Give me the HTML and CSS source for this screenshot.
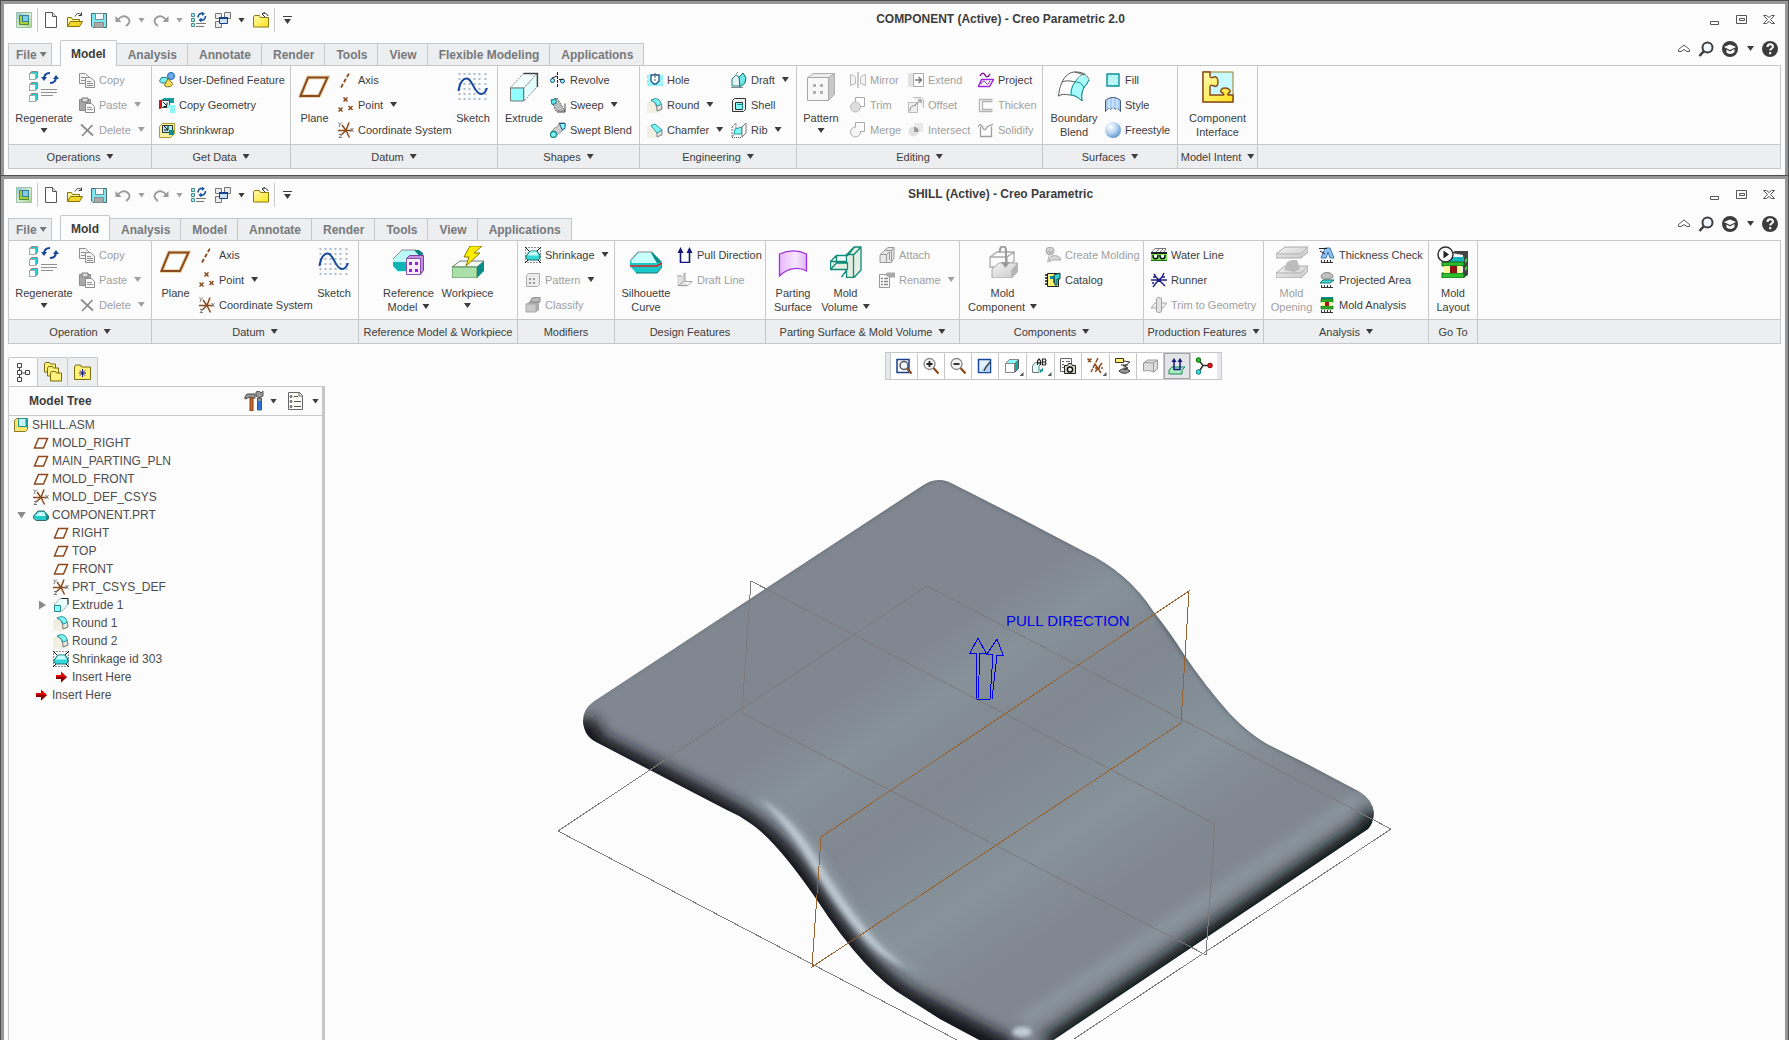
FILE: index.html
```html
<!DOCTYPE html>
<html lang="en">
<head>
<meta charset="utf-8">
<title>SHILL (Active) - Creo Parametric</title>
<link rel="stylesheet" href="styles.css">
</head>
<body>
<svg class="sprite" aria-hidden="true">
<defs>
<linearGradient id="gg" x1="0" y1="0" x2="1" y2="1"><stop offset="0" stop-color="#f4f4f4"/><stop offset="1" stop-color="#c8c8c8"/></linearGradient>
<linearGradient id="gy" x1="0" y1="0" x2="1" y2="1"><stop offset="0" stop-color="#fffbb0"/><stop offset="1" stop-color="#ffe21a"/></linearGradient>
<linearGradient id="gv" x1="0" x2="1"><stop offset="0" stop-color="#e9b8ff"/><stop offset=".6" stop-color="#f6e6ff"/><stop offset="1" stop-color="#e2b4fa"/></linearGradient>
<linearGradient id="glogo" x1="0" y1="0" x2="1" y2="1"><stop offset="0" stop-color="#8cc4e8"/><stop offset=".5" stop-color="#dcebd0"/><stop offset="1" stop-color="#a9d08a"/></linearGradient>
<radialGradient id="gball" cx=".35" cy=".3" r=".75"><stop offset="0" stop-color="#fff"/><stop offset=".5" stop-color="#bcd8f2"/><stop offset="1" stop-color="#5e93cc"/></radialGradient>
</defs>
<symbol id="logo" viewBox="0 0 16 16"><path d="M.5.5h15v15H.5z" fill="url(#glogo)" stroke="#9cc4a8"/><path d="M3.500 3.500h9v9h-9z" fill="#a8d03c" stroke="#4c8a3c"/><path d="M6.500 3.500h6v6h-6z" fill="#7fcbe4" stroke="#2f7f9c"/></symbol>
<symbol id="new" viewBox="0 0 16 16"><path d="M2.500.5h7l4 4v11h-11z" fill="#fff" stroke="#555"/><path d="M9.500.5v4h4" fill="#ddd" stroke="#555"/></symbol>
<symbol id="open" viewBox="0 0 16 16"><path d="M.5 14.500v-9h4l1 2h7v2" fill="#fff5a0" stroke="#8a7400"/><path d="M.5 14.500l3-5h12l-3 5z" fill="#f2d62e" stroke="#8a7400"/><path d="M8 4.500c1-3 4-4 6-2M14.500.5v3h-3" fill="none" stroke="#333"/></symbol>
<symbol id="save" viewBox="0 0 16 16"><path d="M.5 1.500h15v14H2l-1.500-1.500z" fill="#7fe8ee" stroke="#4a6a70"/><path d="M4.500 1.500h8v6h-8z" fill="#fff" stroke="#6b9094"/><path d="M3.500 10.500h9v5h-9z" fill="#a8a8a8" stroke="#8a8a8a"/></symbol>
<symbol id="undo" viewBox="0 0 16 16"><path d="M3 8c2-4 7-5 10-2s1 6-2 8" fill="none" stroke="#9a9a9a" stroke-width="1.800"/><path d="M.5 4v6h6z" fill="#9a9a9a"/></symbol>
<symbol id="redo" viewBox="0 0 16 16"><path d="M13 8C11 4 6 3 3 6s-1 6 2 8" fill="none" stroke="#9a9a9a" stroke-width="1.800"/><path d="M15.500 4v6h-6z" fill="#9a9a9a"/></symbol>
<symbol id="regen16" viewBox="0 0 16 16"><path d="M.5 1.500h3v3h-3zM.5 6.500h3v3h-3zM.5 11.500h3v3h-3z" fill="#9ff0f0" stroke="#4a8a8a"/><path d="M7 5.500c0-3 2-4.500 5-4M14.500 4c0 3-2 4.500-5 4" fill="none" stroke="#17509c" stroke-width="1.600"/><path d="M11 0l3 1.500-3 2.500zM10.500 5.500v5l-3-2.500z" fill="#17509c"/><path d="M5 11.500h10M5 14.500h8" stroke="#777"/></symbol>
<symbol id="wins" viewBox="0 0 16 16"><g fill="#ececec" stroke="#777"><path d="M.5 1.500h6v5h-6zM9.500.5h6v6h-6zM.5 9.500h6v6h-6z"/></g><path d="M4.500 5.500h8v6h-8z" fill="#cfe0f6" stroke="#17408c"/><path d="M4 5h9v2H4z" fill="#17408c"/></symbol>
<symbol id="closef" viewBox="0 0 16 16"><path d="M.5 15V5l1-1.500h5l1 2h8V15z" fill="url(#gy)" stroke="#8a7a10"/><path d="M15 4c-1-3-4-3-5-2M12 0L9 2l3 3" fill="none" stroke="#333"/></symbol>
<symbol id="regen" viewBox="0 0 32 32"><g id="cube"><path d="M1.500 2.500l2-2h6v6l-2 2h-6z" fill="#16d2d2" stroke="#8a8a8a"/><path d="M1.500 2.500h6v6h-6z" fill="#f6ffff" stroke="#a0a8a8"/></g><use href="#cube" y="11"/><use href="#cube" y="22"/><path d="M16 8c0-4 2-6 6-6M28 6c0 4-2 6-6 6" fill="none" stroke="#17489c" stroke-width="2"/><path d="M13 6l3 4 3-4zM25 8l3-4 3 4z" fill="#17489c"/><path d="M13 18.500h16M13 21.500h16M13 24.500h12" stroke="#909090"/></symbol>
<symbol id="copy" viewBox="0 0 16 16"><g fill="#f2f2f2" stroke="#8f8f8f"><path d="M.5 1.500h6l3 3v7h-9z"/><path d="M6.500 5.500h5l4 3.500v6.500h-9z"/><path d="M2 5.500h4M2 8.500h4M8 9.500h4M8 11.500h6M8 13.500h6"/></g></symbol>
<symbol id="paste" viewBox="0 0 16 16"><path d="M.5 2.500h11v11H.5z" fill="#a8a8a8" stroke="#8a8a8a"/><path d="M3 1h6v4H3z" fill="#ddd" stroke="#777"/><path d="M6.500 6.500h6l3 3v6h-9z" fill="#fafafa" stroke="#8a8a8a"/><path d="M8 10.500h5M8 12.500h6" stroke="#999"/></symbol>
<symbol id="delete" viewBox="0 0 16 16"><path d="M2 2.500l12 11M13.500 3L3 14" stroke="#8a8a8a" stroke-width="1.700" fill="none"/></symbol>
<symbol id="udf" viewBox="0 0 16 16"><path d="M.5 9l2-3.500h5l2 2.500-2 3h-5z" fill="#7ff0f0" stroke="#1c7f8a"/><circle cx="12" cy="4" r="3.500" fill="#6aaef2" stroke="#1b5ca8"/><path d="M9 6.500l4.500 5c1 3-7 5-8 1.500z" fill="#f5dc5a" stroke="#7d6a10"/></symbol>
<symbol id="copygeo" viewBox="0 0 16 16"><path d="M0 3h2v9H0z" fill="#d01818"/><path d="M2 3l3-2h10v5H2z" fill="#159c9c"/><path d="M2.500 3.500h8v7h-8z" fill="#e4ffff" stroke="#444"/><path d="M4 5l4 4M8 5.500v4H4.500" stroke="#111" fill="none"/><path d="M8 8h8v8h-5V11H8z" fill="#8df6f6"/></symbol>
<symbol id="shrinkwrap" viewBox="0 0 16 16"><path d="M.5 4.500l3-3h12v10l-4 4H.5z" fill="#f9efa0" stroke="#b09a28"/><path d="M3.500 3.500h10v7h-10z" fill="#a8f0f0" stroke="#333"/><path d="M5 4l4 4M9 4v4H5" stroke="#111" fill="none"/><path d="M10 8h5v5h-5z" fill="#0d8c8c"/></symbol>
<symbol id="plane" viewBox="0 0 32 32"><path d="M9 6.500h19.500L20 25H1.500z" fill="#fff" stroke="#e8d9b0" stroke-width="4"/><path d="M9 6.500h19.500L20 25H1.500z" fill="none" stroke="#8a4a1e" stroke-width="2"/></symbol>
<symbol id="plane16" viewBox="0 0 16 16"><path d="M5.500 3.500h9l-4 9.500h-9z" fill="#fff" stroke="#8a4a1e" stroke-width="1.500"/></symbol>
<symbol id="axis" viewBox="0 0 16 16"><path d="M3 15.500L11.500.5" stroke="#8a4a1e" stroke-width="1.800" stroke-dasharray="4 2"/></symbol>
<symbol id="point" viewBox="0 0 16 16"><path d="M5.500.5l4 4m0-4l-4 4M.5 10.500l4 4m0-4l-4 4M10.500 9l4 4m0-4l-4 4" stroke="#8a4a1e" stroke-width="1.500"/></symbol>
<symbol id="csys" viewBox="0 0 16 16"><path d="M8 8.500H0M8 8.500h5M8 8.500l3-8M8 8.500L3 13M8 8.500l3.500 7M8 8.500L4 3" stroke="#8a4a1e" stroke-width="1.500"/><path d="M.5.5l1.500 2L4 .5M2 2.500L1 5M12.500 6l3 4m0-4l-3 4M1 12.500h3l-3 3h3" fill="none" stroke="#777"/></symbol>
<symbol id="sketch" viewBox="0 0 32 32"><path d="M2.500 2v28M7.500 2v28M12.500 2v28M17.500 2v28M22.500 2v28M28.500 2v28" stroke="#a9bccb" stroke-width="2" stroke-dasharray="2 3"/><path d="M1.500 20C3 10 7 7 10 7.500c6 1 7 15 14 15.500 3 0 5-3 6-6" fill="none" stroke="#17489c" stroke-width="2"/></symbol>
<symbol id="extrude" viewBox="0 0 32 32"><path d="M2 17L15.500 2.500H29L16 17z" fill="#f2ffff" stroke="#888" stroke-dasharray="2 1"/><path d="M29 2.500v13.500L16 30V17z" fill="#e4ffff" stroke="#888" stroke-dasharray="2 1"/><path d="M15.500 2.500H29.500V16" fill="none" stroke="#444" stroke-width="1.300"/><path d="M2.500 17h13v13h-13z" fill="#92ffff" stroke="#777"/></symbol>
<symbol id="extrude16" viewBox="0 0 16 16"><path d="M1 8l6-6.500h8v6L8 15z" fill="#e8ffff" stroke="#888" stroke-dasharray="2 1"/><path d="M9 1.500h6v6" fill="none" stroke="#222"/><path d="M1.500 8.500h6v6h-6z" fill="#8ff" stroke="#298a8a"/></symbol>
<symbol id="revolve" viewBox="0 0 16 16"><path d="M7.500 0v16" stroke="#222" stroke-dasharray="3 1"/><circle cx="2.500" cy="8.500" r="2" fill="#8ff" stroke="#247"/><circle cx="12.500" cy="9" r="2" fill="#8ff" stroke="#247"/><path d="M2 6l5-2M9 7.500h4" stroke="#222"/></symbol>
<symbol id="sweep" viewBox="0 0 16 16"><path d="M1 3l6-2 8 13H6z" fill="#bcbcbc" stroke="#666" stroke-dasharray="2 1"/><path d="M1 3.500l5-2v5l-4 1z" fill="#5fe8e8" stroke="#1c7f8a"/><path d="M15 6.500V15H7" fill="none" stroke="#444"/></symbol>
<symbol id="swept" viewBox="0 0 16 16"><path d="M2 10C4 4 9 6 9 1h6c0 8-5 9-8 12z" fill="#cdcdcd" stroke="#888"/><path d="M9.500 1.500h5.500v5l-3 1z" fill="#8ff" stroke="#258"/><circle cx="3.500" cy="12.500" r="3" fill="#8ff" stroke="#198a8a" stroke-width="1.300"/></symbol>
<symbol id="hole" viewBox="0 0 16 16"><path d="M0 3h16v11H0z" fill="#8ef2f2"/><path d="M0 8l4-5M0 13l5-6M12 13l4-5M6 14l3-2" stroke="#dff"/><path d="M4 3h8v6l-3 3H7L4 9z" fill="#fff" stroke="#258" stroke-width="1.300"/><path d="M8 1v9" stroke="#555" stroke-dasharray="2 1"/></symbol>
<symbol id="round" viewBox="0 0 16 16"><path d="M0 5l7-3c5 0 7 3 8 7v5l-6 2H0z" fill="#f1eee2"/><path d="M4 3c8-3 11 4 11 9l-5 2c0-6-2-9-6-11z" fill="#e6e6e0" stroke="#777"/><path d="M4 3.500c5-4 10-1 10 4L10 9C9 6 7 4 4 3.500z" fill="#7ff5f5" stroke="#2b9aa0"/></symbol>
<symbol id="chamfer" viewBox="0 0 16 16"><path d="M0 5l8-3 7 7v4l-6 3H0z" fill="#f1eee2"/><path d="M10 15V9l5-1v5z" fill="#ddd" stroke="#888"/><path d="M4 3.500L8 2l7 6-5 3z" fill="#7ff5f5" stroke="#2b9aa0"/></symbol>
<symbol id="draft" viewBox="0 0 16 16"><path d="M1 7l4-4 4 3v8H1z" fill="#e6f3f3" stroke="#188080"/><path d="M8 5l4-4 3 5-1 5-5 4z" fill="#6fe4e4" stroke="#107070"/><path d="M0 15.500h12M5 2l2-2" stroke="#888"/></symbol>
<symbol id="shell" viewBox="0 0 16 16"><path d="M1.500 3.500l2-2h11v11l-2 2h-11z" fill="#eee" stroke="#333"/><path d="M4.500 5.500h7v7h-7z" fill="#7ff5f5" stroke="#333"/><path d="M6.500 7.500h5v5" fill="none" stroke="#188"/></symbol>
<symbol id="rib" viewBox="0 0 16 16"><path d="M1 5l4-4v9l-4 5z" fill="#f4f4f4" stroke="#777" stroke-dasharray="2 1"/><path d="M4 7l7-2v7H3z" fill="#7ff5f5" stroke="#2b9aa0"/><path d="M11 5l4-4v10l-4 4z" fill="#fff" stroke="#777"/><path d="M1 15.500h10" stroke="#555" stroke-dasharray="1 1"/></symbol>
<symbol id="pattern" viewBox="0 0 32 32"><path d="M23.500 6.500l6-4v21l-6 6z" fill="#c8c8c8" stroke="#b0b0b0"/><path d="M3 6.500l5-4h21.500l-6 4z" fill="#ececec" stroke="#b0b0b0"/><path d="M2.500 6.500h21v23h-21z" fill="#f8f8f8" stroke="#a8a8a8"/><path d="M8 13h3v3H8zM15 13h3v3h-3zM8 20h3v3H8zM15 20h3v3h-3z" fill="#b0b0b0"/></symbol>
<symbol id="pattern16" viewBox="0 0 16 16"><path d="M1.500 3.500l2-2h11v11l-2 2h-11z" fill="#ececec" stroke="#aaa"/><path d="M4 6h2v2H4zM8 6h2v2H8zM4 10h2v2H4zM8 10h2v2H8z" fill="#999"/></symbol>
<symbol id="mirror" viewBox="0 0 16 16"><path d="M8 0v16" stroke="#999"/><path d="M.5 2.500v11l5-2v-5c0-2-2-3-5-4zM15.500 2.500v11l-5-2v-5c0-2 2-3 5-4z" fill="#f4f4f4" stroke="#b8b8b8"/></symbol>
<symbol id="trim" viewBox="0 0 16 16"><path d="M5.500.5h9v9h-9z" fill="#fff" stroke="#aaa"/><circle cx="5.500" cy="10" r="5" fill="#ddd" stroke="#bbb"/></symbol>
<symbol id="merge" viewBox="0 0 16 16"><path d="M5.500.5h9v9h-9z" fill="#fafafa" stroke="#aaa"/><circle cx="5.500" cy="10" r="5" fill="#f4f4f4" stroke="#aaa"/><path d="M6 5h5v4H6z" fill="#fff"/></symbol>
<symbol id="extend" viewBox="0 0 16 16"><path d="M0 1h6v14H0z" fill="#e3e3e3"/><path d="M5.500 1.500h10v13h-10z" fill="#fff" stroke="#aaa"/><path d="M7 8h6M10.500 5l3 3-3 3" fill="none" stroke="#777" stroke-width="1.300"/></symbol>
<symbol id="offset" viewBox="0 0 16 16"><path d="M.5 5.500h9v10h-9zM5 .5h8l2.500 2.500v8" fill="#eee" stroke="#bbb"/><path d="M2 14c0-6 4-5 6-6M7 8l6-5M10 3h3v3" fill="none" stroke="#888"/></symbol>
<symbol id="intersect" viewBox="0 0 16 16"><path d="M6 1h9v9H6z" fill="#e9e9e9"/><circle cx="5.500" cy="9.500" r="5" fill="#e2e2e2"/><path d="M6 5c3 0 5 2 4.500 5H6z" fill="#999"/></symbol>
<symbol id="project" viewBox="0 0 16 16"><path d="M2 4c2-4 4-3 5-1s3 3 5-1" fill="none" stroke="#7a1a9a" stroke-width="1.500"/><path d="M3.500 7.500h12l-4 7H.5z" fill="#fff" stroke="#9a28e0" stroke-width="1.500"/><path d="M3 12c2-4 4-3 5-1s2 2 4-2" fill="none" stroke="#7a1a9a"/></symbol>
<symbol id="thicken" viewBox="0 0 16 16"><path d="M14.500 2.500h-13v12h13M14.500 4.500H4.500v8h10" fill="none" stroke="#b4b4b4" stroke-width="1.300"/></symbol>
<symbol id="solidify" viewBox="0 0 16 16"><path d="M0 5c2-4 4-2 5 1s3 1 4-1l6-3M2.500 5v9.500h11v-10" fill="none" stroke="#a0a0a0" stroke-width="1.300"/></symbol>
<symbol id="boundary" viewBox="0 0 32 32"><path d="M.5 25C2 11 8 1 17 1c6 0 11 1 14 8l-3 5c-4 4-5 10-4 16-3-3-7-6-12-6-5-1-9-1-11 1z" fill="#fff" stroke="#555"/><path d="M17 11c3-4 7-5 10-7l4 5-3 5c-4 4-5 10-4 16-3-3-7-6-12-6 0-5 1-9 5-13z" fill="#a8fbfb"/><path d="M31 9l-3 5c-4 4-5 10-4 16-3-3-7-6-11-6 0-5 1-9 4-13 3-4 6-8 10-8M17 11c4 0 7 1 9 6" fill="none" stroke="#0b8c8c"/><path d="M4 11c5-2 9-1 13 0M17 1c4 1 7 2 9 3" fill="none" stroke="#555"/></symbol>
<symbol id="fill" viewBox="0 0 16 16"><path d="M2 2h12v12H2z" fill="#a8f4f6" stroke="#0f9096" stroke-width="1.400"/><path d="M4 12l8-8M7 13l6-6M3 9l6-6" stroke="#e8ffff"/></symbol>
<symbol id="style" viewBox="0 0 16 16"><path d="M.5 3.500c4-4 11-4 15 0v11c-2-3-4-4-5-2-1-2-4-2-5 0-1-2-3-1-5 2z" fill="#a9cdf2" stroke="#445a78"/><path d="M4 2v10M8 1v11M12 2v10" stroke="#e8f4ff"/></symbol>
<symbol id="freestyle" viewBox="0 0 16 16"><circle cx="8" cy="8" r="8" fill="url(#gball)"/></symbol>
<symbol id="compif" viewBox="0 0 32 32"><path d="M1 1h30v30H1z" fill="#c8fbff" stroke="#a07a20"/><path d="M1 1h7v4c0 2 2 2 4 1s4 1 4 5-2 5-4 4-4-1-4 1v8h13c2 0 0-2-2-3-1-2 1-4 4-4s6 2 5 4c-2 1-3 3-1 3h4v7H1z" fill="url(#gy)" stroke="#8a4a1e" stroke-width="1.500"/></symbol>
<symbol id="refmodel" viewBox="0 0 32 32"><path d="M0 13L9 4h14l8 8v10l-5 4H4l-4-5z" fill="#bafafa"/><path d="M0 16h14v9H5l-5-5z" fill="#0fb5b5"/><path d="M21 4l8 9 1-6-4-3z" fill="#0a8080"/><path d="M13.500 12.500l3-3h14v15l-3 4z" fill="#c48fe0" stroke="#7a3f9e"/><path d="M13.500 12.500h14v16h-14z" fill="#f6ecfc" stroke="#8a4fae"/><path d="M16 16h3v3h-3zM22 16h3v3h-3zM16 23h3v3h-3zM22 23h3v3h-3z" fill="#9a1fce"/><path d="M0 13L9 4h14" fill="none" stroke="#888"/></symbol>
<symbol id="workpiece" viewBox="0 0 32 32"><path d="M0 21l8-6h24l-7 6z" fill="#f4fdf4" stroke="#777"/><path d="M0 21h25v11H0z" fill="#a9dfa9" stroke="#5a8f5a"/><path d="M25 21l7-6v10l-7 7z" fill="#0a8c8c"/><path d="M18 0h12l-8 7h6L14 20l3-9h-5z" fill="#ffee00" stroke="#8a7a00"/></symbol>
<symbol id="shrink" viewBox="0 0 16 16"><path d="M.5.500h15v15H.5z" fill="none" stroke="#222" stroke-dasharray="1 2"/><path d="M0 0l4 4M16 0l-4 4M0 16l3-3M16 16l-3-3" stroke="#111"/><path d="M1 9l4-5h7l3 4v3l-2 2H3l-2-2z" fill="#35d8d8" stroke="#146e6e"/><path d="M2.500 8.500l3-4h6l2 4z" fill="#c8ffff"/></symbol>
<symbol id="part16" viewBox="0 0 16 16"><path d="M.5 9L5 4h6l4.500 5v3L13 13.500H3L.5 11z" fill="#2bcaca" stroke="#3b6a6a"/><path d="M2 9l4-4h5l2 4z" fill="#c0fcfc"/><path d="M12 5l3 4v3l-2 1V9z" fill="#0a8a8a"/></symbol>
<symbol id="classify" viewBox="0 0 16 16"><path d="M1 7h10v8H1z" fill="#c9c9c9" stroke="#aaa"/><path d="M1 7l3-2h10l-3 2zM11 7l3-2v8l-3 2z" fill="#aaa"/><path d="M5 5l2-4 8-1v5z" fill="#bbb" stroke="#888"/></symbol>
<symbol id="silhouette" viewBox="0 0 32 32"><path d="M0 15L8 6h14l10 11v4l-5 6H6l-6-7z" fill="#19c8c8"/><path d="M1 15L9 6h12l6 11H2z" fill="#c8ffff"/><path d="M22 6l10 10-5 1-6-10z" fill="#0a8c8c"/><path d="M0 20h27l5-3" fill="none" stroke="#e02020" stroke-width="1.500"/><path d="M0 15L8 6h14" fill="none" stroke="#888"/><path d="M6 27h21l5-6v-4" fill="none" stroke="#167070"/></symbol>
<symbol id="pull" viewBox="0 0 16 16"><path d="M3.500 3v12.500h9V3" fill="none" stroke="#15157c" stroke-width="1.600"/><path d="M.5 6l3-6 3 6zM9.500 6l3-6 3 6z" fill="#15157c"/></symbol>
<symbol id="draftline" viewBox="0 0 16 16"><path d="M0 3.500h6V10l3 1 2 2-4 2L0 14z" fill="#e2e2e2"/><path d="M7 1v8l-6 5M8 .5v9h7l-4 4H1M0 4h5" fill="none" stroke="#a0a0a0"/></symbol>
<symbol id="psurf" viewBox="0 0 32 32"><path d="M2.500 8c9-4 19-4 27 0v17c-7-4-18-4-27 5z" fill="url(#gv)" stroke="#a030d8" stroke-width="1.300"/></symbol>
<symbol id="mvol" viewBox="0 0 32 32"><path d="M1 16h17V9l6-8h7v24l-7 7h-7V24H1z" fill="#e4efe2"/><path d="M.5 15.500h16v-7h7v23h-7v-8h-16zM.5 15.500l6-6h11l7-8.500h6.500v23L24 31.500M17 8.500l7-7.500M24 8.500l7-7.500M6.500 10v7h11v6l-6 8M.5 23.500l6-6.500" fill="none" stroke="#0f8a7a" stroke-width="1.300"/></symbol>
<symbol id="attach" viewBox="0 0 16 16"><path d="M6 3l3-2.500h6V11l-3 4.500H1V8l3-3z" fill="#e8e8e8" stroke="#999"/><path d="M6.500 3.500h6v12M1.500 7.500h6v8M12.500 3.500l2.500-3M7.500 7.500l3-2.500v8" fill="none" stroke="#999"/></symbol>
<symbol id="rename" viewBox="0 0 16 16"><path d="M.5 2.500h10v13H.5z" fill="#fff" stroke="#999"/><path d="M6 3l2-2.500h8v5h-6z" fill="#aaa"/><path d="M2 6.500h2M5 6.500h4M2 9.500h2M5 9.500h4M2 12.500h2M5 12.500h4" stroke="#888" stroke-width="1.500"/></symbol>
<symbol id="mcomp" viewBox="0 0 32 32"><path d="M3 21V11l7-5h17v9l-7 6zM3 11h17l7-5M20 11v10" fill="none" stroke="#aaa" stroke-width="1.300"/><path d="M5 23l7-6h19l-6 7v8H5z" fill="url(#gg)" stroke="#aaa"/><path d="M25 24l6-7v9l-6 6z" fill="#b4b4b4"/><path d="M13 6c-1-7 6-7 6-2v14" fill="none" stroke="#9a9a9a" stroke-width="2"/><path d="M14 16h9l-4.500 6z" fill="#999"/></symbol>
<symbol id="cmold" viewBox="0 0 16 16"><circle cx="5" cy="4" r="4" fill="#d0d0d0" stroke="#aaa"/><path d="M0 4h10l-2 3H5L3 16l-1-1 2-9z" fill="#bbb"/><path d="M4 14c0-8 12-6 12-1H7l-3 2z" fill="#d8d8d8" stroke="#aaa"/></symbol>
<symbol id="catalog" viewBox="0 0 16 16"><path d="M2.500 1.500h11v13h-11z" fill="#f7f07a" stroke="#222"/><path d="M0 3h3M0 6h3M0 9h3M0 12h3" stroke="#111" stroke-width="1.500"/><path d="M5 4h5v7H8V7H5z" fill="#138c9c"/><path d="M9 3l6-2v6h-3v6h-2z" fill="#37cfcf" stroke="#144"/></symbol>
<symbol id="water" viewBox="0 0 16 16"><path d="M1 5l3-3.500h11l-2 3.500M5 5l3-3M9 5l3-3" fill="none" stroke="#777"/><path d="M0 5h16v2H0z" fill="#222"/><path d="M0 7h16v7H0z" fill="#6fe44c"/><path d="M2 8c0 5 5 5 5 0M9 8c0 5 5 5 5 0" fill="#fff" stroke="#111" stroke-width="1.500"/><path d="M0 13.500h16" stroke="#226a16"/></symbol>
<symbol id="runner" viewBox="0 0 16 16"><path d="M0 8h16M3 2l2 3 6 6 3 3M13 1l-2 4-6 6-3 4M11 5h3M2 5h3M3 11H1" fill="none" stroke="#1c1c84" stroke-width="1.400"/></symbol>
<symbol id="trimgeo" viewBox="0 0 16 16"><path d="M0 11l4-5h12l-4 5z" fill="#f0f0f0" stroke="#aaa"/><path d="M5.500 2c0-2 5-2 5 0v12c0 2-5 2-5 0z" fill="#e2e2e2" stroke="#a0a0a0"/></symbol>
<symbol id="mopen" viewBox="0 0 32 32"><path d="M0 8l9-7h23v5l-7 6H0z" fill="url(#gg)" stroke="#aaa"/><path d="M0 27l9-7h23v5l-7 7H0z" fill="url(#gg)" stroke="#aaa"/><path d="M0 8h25l7-7M0 27h25l7-7" fill="none" stroke="#b0b0b0"/><path d="M8 24l3-8 5-2h5l3 9-6 3z" fill="#bcbcbc"/></symbol>
<symbol id="thick" viewBox="0 0 16 16"><path d="M2 11l4-10h5l4 10h-4L9 5l-2 6z" fill="#8ec4f4" stroke="#3a76b4"/><path d="M0 1.500h8M1 4l5 3" stroke="#222"/><path d="M2 15.500h12M2.500 13v2M5.500 13v2M8.500 13v2M11.500 13v2" stroke="#333"/></symbol>
<symbol id="parea" viewBox="0 0 16 16"><path d="M2 5c0-6 12-6 12 0l-3 2H4z" fill="#c0c0c0" stroke="#888"/><path d="M1 11l3-3h11l-4 3z" fill="#4fe0e0" stroke="#0a6e6e"/><path d="M2 15.500h12M2.500 13v2M5.500 13v2M8.500 13v2M11.500 13v2" stroke="#333"/></symbol>
<symbol id="manal" viewBox="0 0 16 16"><path d="M2 0h12v2H2z" fill="#0a8c8c"/><path d="M2 2h12v3H2zM2 9h12v3H2z" fill="#28b428" stroke="#0c5a0c" stroke-width=".6"/><path d="M3 5h10v4H3z" fill="#fff6a0"/><path d="M6 5h4v4H6z" fill="#b01818"/><path d="M2 15.500h12M2.500 13v2M5.500 13v2M8.500 13v2M11.500 13v2" stroke="#333"/></symbol>
<symbol id="mlayout" viewBox="0 0 32 32"><path d="M14 7l4-2h13v24l-5 3V9z" fill="#444"/><path d="M5 11h22v5H5z" fill="#14b4bc"/><path d="M5 16h22v4H5zM5 27h22v5H5z" fill="#2fbe2f" stroke="#0c6a0c"/><path d="M7 20h18v7H7z" fill="#fff6a0"/><path d="M13 20h7v7h-7z" fill="#8c1414"/><path d="M28 14l2-2v3l-2 2zM28 22l2-2v3l-2 2z" fill="#4fe04f"/><circle cx="8.500" cy="8.500" r="7.500" fill="#fff" stroke="#333" stroke-width="1.500"/><path d="M6.500 4.500v8l5.500-4z" fill="#222"/></symbol>
<symbol id="min" viewBox="0 0 12 12"><path d="M1.500 7.500h8v3h-8z" fill="#fff" stroke="#555"/></symbol>
<symbol id="max" viewBox="0 0 12 12"><path d="M.5 1.500h10v8H.5zM3.500 4.500h5v2h-5z" fill="none" stroke="#555"/></symbol>
<symbol id="close" viewBox="0 0 12 12"><path d="M.5 1.500h3l2.500 2 2.500-2h3l-4 4 4 4h-3l-2.500-2-2.500 2h-3l4-4z" fill="#fff" stroke="#555"/></symbol>
<symbol id="collapse" viewBox="0 0 12 12"><path d="M.5 6.500L6 2l5.500 4.500v2H9L6 6.500 3 8.500H.5z" fill="#fff" stroke="#555"/></symbol>
<symbol id="search" viewBox="0 0 16 16"><circle cx="9.500" cy="6.500" r="5" fill="#f2f8ff" stroke="#3c3c3c" stroke-width="2"/><path d="M6 10l-4.500 5" stroke="#3c3c3c" stroke-width="2.600"/></symbol>
<symbol id="learn" viewBox="0 0 16 16"><circle cx="8" cy="8" r="8" fill="#3c3c3c"/><path d="M2 6l6-2.500L14 6 8 9zM4.500 8.500v3c2 2 6 2 8-.5v-3L8 10.500z" fill="#fff"/></symbol>
<symbol id="help" viewBox="0 0 16 16"><circle cx="8" cy="8" r="8" fill="#3c3c3c"/><path d="M5.500 6c0-3.500 5.500-3.500 5.500-.3C11 7.500 8.200 7.500 8.200 9.500M8.200 11v2.200" fill="none" stroke="#fff" stroke-width="2"/></symbol>
<symbol id="treeic" viewBox="-2 0 20 20"><path d="M4.500 5v10M5 10h6" stroke="#444"/><path d="M2.500.5h4v4h-4zM2.500 7.500h4v4h-4zM10.500 7.500h4v4h-4zM2.500 14.500h4v4h-4z" fill="#fff" stroke="#444"/></symbol>
<symbol id="folders" viewBox="0 0 20 20"><g fill="#fff27a" stroke="#7a6a10"><path d="M1.500 2l1-1.500h4l1 1.500h5v8h-11z"/><path d="M4.500 6l1-1.500h4l1 1.500h5v8h-11z"/><path d="M7.500 11l1-1.500h4l1 1.500h5v8h-11z"/></g></symbol>
<symbol id="favs" viewBox="0 0 20 20"><path d="M1.500 17.500V5l1-2h5l1 2h9v12.500z" fill="#fff27a" stroke="#7a6a10"/><path d="M9.500 7v8M6 11h7M7 8.500l5 5M12 8.500l-5 5" stroke="#1a1a9c"/></symbol>
<symbol id="tools" viewBox="0 0 20 20"><path d="M1 6l2-3h8v4H8L6 6 1 8z" fill="#999" stroke="#444"/><path d="M6 7h3v13H6z" fill="#d86a20" stroke="#7a3a10"/><path d="M12 1v4l3 2 4-2V0l-2 2-2-2zM13.500 7h4v12h-4z" fill="#999" stroke="#555"/><path d="M14 10h3v9h-3z" fill="#2f6fd0"/></symbol>
<symbol id="settings" viewBox="0 0 20 20"><path d="M2.500 1.500h11l3 3v14h-14z" fill="#fdfdf8" stroke="#666"/><path d="M13 1v4h4" fill="none" stroke="#666"/><path d="M8 5.500h4M8 10.500h7M8 15.500h7" stroke="#555"/><g fill="#fff" stroke="#444"><circle cx="5" cy="5.500" r="1"/><circle cx="5" cy="10.500" r="1"/><circle cx="5" cy="15.500" r="1"/></g></symbol>
<symbol id="asm" viewBox="0 0 16 16"><path d="M1.500 3.500l2-2h11v11l-2 2h-11z" fill="#f8e670" stroke="#8a7a20"/><path d="M5.500 1.500h8v8h-8z" fill="#c4f6f8" stroke="#2b8a8a"/><path d="M12.500 2.500l2-1v8l-2 1z" fill="#1a9c9c"/></symbol>
<symbol id="insert" viewBox="0 0 16 16"><path d="M3 6h5V2.500L14 8l-6 5.500V10H3z" fill="#e00000"/><path d="M3 8h11L8 13.500V10H3z" fill="#8a0000"/></symbol>
<symbol id="zfit" viewBox="0 0 18 18"><path d="M2 2.500h12v13H2z" fill="#fff" stroke="#17408c" stroke-width="1.500"/><circle cx="9" cy="8.500" r="4" fill="#eef6ff" stroke="#555" stroke-width="1.500"/><path d="M12 11.500l4.500 5" stroke="#8a4a1e" stroke-width="2.200"/></symbol>
<symbol id="zin" viewBox="0 0 18 18"><circle cx="7.500" cy="7" r="5.500" fill="#f4f4f4" stroke="#888" stroke-width="1.300"/><path d="M4.500 7h6M7.500 4v6" stroke="#222" stroke-width="1.800"/><path d="M11.500 11l5 5.500" stroke="#8a4a1e" stroke-width="2.200"/></symbol>
<symbol id="zout" viewBox="0 0 18 18"><circle cx="7.500" cy="7" r="5.500" fill="#f4f4f4" stroke="#888" stroke-width="1.300"/><path d="M4.500 7h6" stroke="#222" stroke-width="1.800"/><path d="M11.500 11l5 5.500" stroke="#8a4a1e" stroke-width="2.200"/></symbol>
<symbol id="repaint" viewBox="0 0 18 18"><path d="M2.500 2.500h12v13h-12z" fill="#e4f0fc" stroke="#17489c" stroke-width="1.500"/><path d="M3 15L14 4v11z" fill="#b8d6f4"/><path d="M8 14l2-4 4-5" fill="none" stroke="#333" stroke-width="1.300"/></symbol>
<symbol id="dstyle" viewBox="0 0 18 18"><path d="M2.500 6.500l4-4h9v9l-4 4z" fill="#12a8a8" stroke="#555"/><path d="M2.500 6.500l4-4h9l-4 4z" fill="#8ff" stroke="#888"/><path d="M2.500 6.500h9v9h-9z" fill="#fff" stroke="#888"/></symbol>
<symbol id="named" viewBox="0 0 18 18"><path d="M1.500 9l3-3.500h6L8 9v6.500H1.500z" fill="#dff" stroke="#777"/><path d="M12 11v3l-3 2v-3z" fill="#129c9c"/><path d="M6.500 8V4l1.500-2L9.500 4v4M6.500 6h3M11.500 2v6h2.500l1-1.500-1-1.500h-2.500h2.500l1-1.500-1-1.500z" fill="none" stroke="#222" stroke-width="1.200"/></symbol>
<symbol id="camera" viewBox="0 0 18 18"><path d="M1.500 1.500h11v13h-11z" fill="#fff" stroke="#666"/><path d="M3 4.500h2M7 4.500h4M3 7.500h2M3 10.500h2" stroke="#666"/><path d="M5.500 8.500h3l1-2h3l1 2h3v8h-11z" fill="#d8d4c4" stroke="#222"/><circle cx="11" cy="12.500" r="2.600" fill="#fff" stroke="#111" stroke-width="1.500"/></symbol>
<symbol id="datumf" viewBox="0 0 18 18"><path d="M1.500 1.500l4 4m0-4l-4 4M12 1L5 15M9 11h8M9 7l6 9M16 6l-7 9" stroke="#8a4a1e" stroke-width="1.500" stroke-dasharray="5 1"/></symbol>
<symbol id="annot" viewBox="0 0 18 18"><path d="M1.500 1.500h8v4h-8z" fill="#fff06a" stroke="#333"/><path d="M10 4l6 1-5 4" fill="none" stroke="#333"/><path d="M7 8h7M9 8l5 3-4 2M5 14c3-3 8-3 11 0-3 3-8 3-11 0z" fill="#999" stroke="#333"/></symbol>
<symbol id="surf" viewBox="0 0 18 18"><path d="M2.500 6l4-3h10v9l-4 3c-2-1-6-2-10-1z" fill="#dcdcdc" stroke="#999"/><path d="M2.500 6c3-1 7 0 10 0l4-3M12.500 6v9" fill="none" stroke="#999"/></symbol>
<symbol id="pullv" viewBox="0 0 18 18"><path d="M1 13l3-3h13l-3 3v4H1z" fill="#a8ecc0" stroke="#1a8a5a"/><path d="M6 13V4M12 13V4M6 12.500h6" stroke="#15157c" stroke-width="1.500" fill="none"/><path d="M3.500 5L6 1l2.500 4zM9.500 5L12 1l2.500 4z" fill="#15157c"/></symbol>
<symbol id="spin" viewBox="0 0 18 18"><path d="M4 3.500l4 5h7M8 8.500l-4 6" fill="none" stroke="#333" stroke-width="1.500"/><circle cx="3.500" cy="3" r="2.300" fill="#20c820" stroke="#146014"/><circle cx="15" cy="8.500" r="2.300" fill="#e81818" stroke="#700"/><circle cx="3.500" cy="15" r="2.300" fill="#30e0e8" stroke="#177"/></symbol>
</svg>

<section class="window" aria-label="COMPONENT">
  <header class="titlebar">
    <div class="quick">
      <svg class="i16"><use href="#logo"/></svg><span class="rule"></span>
      <button aria-label="New"><svg class="i16"><use href="#new"/></svg></button>
      <button aria-label="Open"><svg class="i16"><use href="#open"/></svg></button>
      <button aria-label="Save"><svg class="i16"><use href="#save"/></svg></button>
      <button aria-label="Undo" disabled><svg class="i16"><use href="#undo"/></svg><i class="caret"></i></button>
      <button aria-label="Redo" disabled><svg class="i16"><use href="#redo"/></svg><i class="caret"></i></button>
      <button aria-label="Regenerate"><svg class="i16"><use href="#regen16"/></svg></button>
      <button aria-label="Windows"><svg class="i16"><use href="#wins"/></svg><i class="caret"></i></button>
      <button aria-label="Close"><svg class="i16"><use href="#closef"/></svg></button>
      <span class="rule"></span>
      <button aria-label="Customize toolbar" class="more"><i class="caret"></i></button>
    </div>
    <h1 class="title">COMPONENT (Active) - Creo Parametric 2.0</h1>
    <div class="controls">
      <button aria-label="Minimize"><svg class="i12"><use href="#min"/></svg></button>
      <button aria-label="Maximize"><svg class="i12"><use href="#max"/></svg></button>
      <button aria-label="Close window"><svg class="i12"><use href="#close"/></svg></button>
    </div>
  </header>
  <nav class="tabs">
    <button class="tab file">File<i class="caret"></i></button>
    <button class="tab active">Model</button><button class="tab">Analysis</button><button class="tab">Annotate</button><button class="tab">Render</button><button class="tab">Tools</button><button class="tab">View</button><button class="tab">Flexible Modeling</button><button class="tab">Applications</button>
    <div class="helpers">
      <button aria-label="Collapse ribbon"><svg class="i12"><use href="#collapse"/></svg></button>
      <button aria-label="Search"><svg class="i16"><use href="#search"/></svg></button>
      <button aria-label="Learning" class="drop"><svg class="i16"><use href="#learn"/></svg><i class="caret"></i></button>
      <button aria-label="Help"><svg class="i16"><use href="#help"/></svg></button>
    </div>
  </nav>
  <div class="ribbon">
    <section class="group"><div class="tools operations">
      <button class="big"><svg class="i32"><use href="#regen"/></svg><span>Regenerate</span><i class="caret"></i></button>
      <div class="list"><button class="cmd" disabled><svg class="i16"><use href="#copy"/></svg>Copy</button><button class="cmd" disabled><svg class="i16"><use href="#paste"/></svg>Paste<i class="caret"></i></button><button class="cmd" disabled><svg class="i16"><use href="#delete"/></svg>Delete<i class="caret"></i></button></div>
    </div><button class="label">Operations<i class="caret"></i></button></section>
    <section class="group"><div class="tools getdata">
      <div class="list"><button class="cmd"><svg class="i16"><use href="#udf"/></svg>User-Defined Feature</button><button class="cmd"><svg class="i16"><use href="#copygeo"/></svg>Copy Geometry</button><button class="cmd"><svg class="i16"><use href="#shrinkwrap"/></svg>Shrinkwrap</button></div>
    </div><button class="label">Get Data<i class="caret"></i></button></section>
    <section class="group"><div class="tools datum">
      <button class="big"><svg class="i32"><use href="#plane"/></svg><span>Plane</span></button>
      <div class="list"><button class="cmd"><svg class="i16"><use href="#axis"/></svg>Axis</button><button class="cmd"><svg class="i16"><use href="#point"/></svg>Point<i class="caret"></i></button><button class="cmd"><svg class="i16"><use href="#csys"/></svg>Coordinate System</button></div>
      <button class="big"><svg class="i32"><use href="#sketch"/></svg><span>Sketch</span></button>
    </div><button class="label">Datum<i class="caret"></i></button></section>
    <section class="group"><div class="tools shapes">
      <button class="big"><svg class="i32"><use href="#extrude"/></svg><span>Extrude</span></button>
      <div class="list"><button class="cmd"><svg class="i16"><use href="#revolve"/></svg>Revolve</button><button class="cmd"><svg class="i16"><use href="#sweep"/></svg>Sweep<i class="caret"></i></button><button class="cmd"><svg class="i16"><use href="#swept"/></svg>Swept Blend</button></div>
    </div><button class="label">Shapes<i class="caret"></i></button></section>
    <section class="group"><div class="tools engineering">
      <div class="list"><button class="cmd"><svg class="i16"><use href="#hole"/></svg>Hole</button><button class="cmd"><svg class="i16"><use href="#round"/></svg>Round<i class="caret"></i></button><button class="cmd"><svg class="i16"><use href="#chamfer"/></svg>Chamfer<i class="caret"></i></button></div>
      <div class="list"><button class="cmd"><svg class="i16"><use href="#draft"/></svg>Draft<i class="caret"></i></button><button class="cmd"><svg class="i16"><use href="#shell"/></svg>Shell</button><button class="cmd"><svg class="i16"><use href="#rib"/></svg>Rib<i class="caret"></i></button></div>
    </div><button class="label">Engineering<i class="caret"></i></button></section>
    <section class="group"><div class="tools editing">
      <button class="big"><svg class="i32"><use href="#pattern"/></svg><span>Pattern</span><i class="caret"></i></button>
      <div class="list"><button class="cmd" disabled><svg class="i16"><use href="#mirror"/></svg>Mirror</button><button class="cmd" disabled><svg class="i16"><use href="#trim"/></svg>Trim</button><button class="cmd" disabled><svg class="i16"><use href="#merge"/></svg>Merge</button></div>
      <div class="list"><button class="cmd" disabled><svg class="i16"><use href="#extend"/></svg>Extend</button><button class="cmd" disabled><svg class="i16"><use href="#offset"/></svg>Offset</button><button class="cmd" disabled><svg class="i16"><use href="#intersect"/></svg>Intersect</button></div>
      <div class="list"><button class="cmd"><svg class="i16"><use href="#project"/></svg>Project</button><button class="cmd" disabled><svg class="i16"><use href="#thicken"/></svg>Thicken</button><button class="cmd" disabled><svg class="i16"><use href="#solidify"/></svg>Solidify</button></div>
    </div><button class="label">Editing<i class="caret"></i></button></section>
    <section class="group"><div class="tools surfaces">
      <button class="big"><svg class="i32"><use href="#boundary"/></svg><span>Boundary<br>Blend</span></button>
      <div class="list"><button class="cmd"><svg class="i16"><use href="#fill"/></svg>Fill</button><button class="cmd"><svg class="i16"><use href="#style"/></svg>Style</button><button class="cmd"><svg class="i16"><use href="#freestyle"/></svg>Freestyle</button></div>
    </div><button class="label">Surfaces<i class="caret"></i></button></section>
    <section class="group"><div class="tools intent">
      <button class="big"><svg class="i32"><use href="#compif"/></svg><span>Component<br>Interface</span></button>
    </div><button class="label">Model Intent<i class="caret"></i></button></section>
    <div class="rest"></div>
  </div>
</section>

<section class="window main" aria-label="SHILL">
  <header class="titlebar">
    <div class="quick">
      <svg class="i16"><use href="#logo"/></svg><span class="rule"></span>
      <button aria-label="New"><svg class="i16"><use href="#new"/></svg></button>
      <button aria-label="Open"><svg class="i16"><use href="#open"/></svg></button>
      <button aria-label="Save"><svg class="i16"><use href="#save"/></svg></button>
      <button aria-label="Undo" disabled><svg class="i16"><use href="#undo"/></svg><i class="caret"></i></button>
      <button aria-label="Redo" disabled><svg class="i16"><use href="#redo"/></svg><i class="caret"></i></button>
      <button aria-label="Regenerate"><svg class="i16"><use href="#regen16"/></svg></button>
      <button aria-label="Windows"><svg class="i16"><use href="#wins"/></svg><i class="caret"></i></button>
      <button aria-label="Close"><svg class="i16"><use href="#closef"/></svg></button>
      <span class="rule"></span>
      <button aria-label="Customize toolbar" class="more"><i class="caret"></i></button>
    </div>
    <h1 class="title">SHILL (Active) - Creo Parametric</h1>
    <div class="controls">
      <button aria-label="Minimize"><svg class="i12"><use href="#min"/></svg></button>
      <button aria-label="Maximize"><svg class="i12"><use href="#max"/></svg></button>
      <button aria-label="Close window"><svg class="i12"><use href="#close"/></svg></button>
    </div>
  </header>
  <nav class="tabs">
    <button class="tab file">File<i class="caret"></i></button>
    <button class="tab active">Mold</button><button class="tab">Analysis</button><button class="tab">Model</button><button class="tab">Annotate</button><button class="tab">Render</button><button class="tab">Tools</button><button class="tab">View</button><button class="tab">Applications</button>
    <div class="helpers">
      <button aria-label="Collapse ribbon"><svg class="i12"><use href="#collapse"/></svg></button>
      <button aria-label="Search"><svg class="i16"><use href="#search"/></svg></button>
      <button aria-label="Learning" class="drop"><svg class="i16"><use href="#learn"/></svg><i class="caret"></i></button>
      <button aria-label="Help"><svg class="i16"><use href="#help"/></svg></button>
    </div>
  </nav>
  <div class="ribbon">
    <section class="group"><div class="tools operations">
      <button class="big"><svg class="i32"><use href="#regen"/></svg><span>Regenerate</span><i class="caret"></i></button>
      <div class="list"><button class="cmd" disabled><svg class="i16"><use href="#copy"/></svg>Copy</button><button class="cmd" disabled><svg class="i16"><use href="#paste"/></svg>Paste<i class="caret"></i></button><button class="cmd" disabled><svg class="i16"><use href="#delete"/></svg>Delete<i class="caret"></i></button></div>
    </div><button class="label">Operation<i class="caret"></i></button></section>
    <section class="group"><div class="tools datum">
      <button class="big"><svg class="i32"><use href="#plane"/></svg><span>Plane</span></button>
      <div class="list"><button class="cmd"><svg class="i16"><use href="#axis"/></svg>Axis</button><button class="cmd"><svg class="i16"><use href="#point"/></svg>Point<i class="caret"></i></button><button class="cmd"><svg class="i16"><use href="#csys"/></svg>Coordinate System</button></div>
      <button class="big"><svg class="i32"><use href="#sketch"/></svg><span>Sketch</span></button>
    </div><button class="label">Datum<i class="caret"></i></button></section>
    <section class="group"><div class="tools refwork">
      <button class="big"><svg class="i32"><use href="#refmodel"/></svg><span>Reference<br>Model<i class="caret"></i></span></button>
      <button class="big"><svg class="i32"><use href="#workpiece"/></svg><span>Workpiece</span><i class="caret"></i></button>
    </div><button class="label">Reference Model &amp; Workpiece</button></section>
    <section class="group"><div class="tools modifiers">
      <div class="list"><button class="cmd"><svg class="i16"><use href="#shrink"/></svg>Shrinkage<i class="caret"></i></button><button class="cmd dim"><svg class="i16"><use href="#pattern16"/></svg>Pattern<i class="caret"></i></button><button class="cmd" disabled><svg class="i16"><use href="#classify"/></svg>Classify</button></div>
    </div><button class="label">Modifiers</button></section>
    <section class="group"><div class="tools design">
      <button class="big"><svg class="i32"><use href="#silhouette"/></svg><span>Silhouette<br>Curve</span></button>
      <div class="list"><button class="cmd"><svg class="i16"><use href="#pull"/></svg>Pull Direction</button><button class="cmd" disabled><svg class="i16"><use href="#draftline"/></svg>Draft Line</button></div>
    </div><button class="label">Design Features</button></section>
    <section class="group"><div class="tools parting">
      <button class="big"><svg class="i32"><use href="#psurf"/></svg><span>Parting<br>Surface</span></button>
      <button class="big"><svg class="i32"><use href="#mvol"/></svg><span>Mold<br>Volume<i class="caret"></i></span></button>
      <div class="list spaced"><button class="cmd" disabled><svg class="i16"><use href="#attach"/></svg>Attach</button><button class="cmd" disabled><svg class="i16"><use href="#rename"/></svg>Rename<i class="caret"></i></button></div>
    </div><button class="label">Parting Surface &amp; Mold Volume<i class="caret"></i></button></section>
    <section class="group"><div class="tools components">
      <button class="big"><svg class="i32"><use href="#mcomp"/></svg><span>Mold<br>Component<i class="caret"></i></span></button>
      <div class="list"><button class="cmd" disabled><svg class="i16"><use href="#cmold"/></svg>Create Molding</button><button class="cmd"><svg class="i16"><use href="#catalog"/></svg>Catalog</button></div>
    </div><button class="label">Components<i class="caret"></i></button></section>
    <section class="group"><div class="tools production">
      <div class="list"><button class="cmd"><svg class="i16"><use href="#water"/></svg>Water Line</button><button class="cmd"><svg class="i16"><use href="#runner"/></svg>Runner</button><button class="cmd" disabled><svg class="i16"><use href="#trimgeo"/></svg>Trim to Geometry</button></div>
    </div><button class="label">Production Features<i class="caret"></i></button></section>
    <section class="group"><div class="tools analysis">
      <button class="big" disabled><svg class="i32"><use href="#mopen"/></svg><span>Mold<br>Opening</span></button>
      <div class="list"><button class="cmd"><svg class="i16"><use href="#thick"/></svg>Thickness Check</button><button class="cmd"><svg class="i16"><use href="#parea"/></svg>Projected Area</button><button class="cmd"><svg class="i16"><use href="#manal"/></svg>Mold Analysis</button></div>
    </div><button class="label">Analysis<i class="caret"></i></button></section>
    <section class="group"><div class="tools goto">
      <button class="big"><svg class="i32"><use href="#mlayout"/></svg><span>Mold<br>Layout</span></button>
    </div><button class="label">Go To</button></section>
    <div class="rest"></div>
  </div>

  <div class="workspace">
    <aside class="sidebar">
      <div class="sidetabs">
        <button class="sidetab active" aria-label="Model Tree"><svg class="i20"><use href="#treeic"/></svg></button>
        <button class="sidetab" aria-label="Folder Browser"><svg class="i20"><use href="#folders"/></svg></button>
        <button class="sidetab" aria-label="Favorites"><svg class="i20"><use href="#favs"/></svg></button>
      </div>
      <div class="panel">
        <div class="panelhead"><h2>Model Tree</h2>
          <button aria-label="Tree tools" class="drop"><svg class="i20"><use href="#tools"/></svg><i class="caret"></i></button>
          <button aria-label="Tree settings" class="drop"><svg class="i20"><use href="#settings"/></svg><i class="caret"></i></button>
        </div>
        <ul class="tree">
          <li><span class="node"><svg class="i16"><use href="#asm"/></svg>SHILL.ASM</span>
            <ul>
              <li><span class="node"><svg class="i16"><use href="#plane16"/></svg>MOLD_RIGHT</span></li>
              <li><span class="node"><svg class="i16"><use href="#plane16"/></svg>MAIN_PARTING_PLN</span></li>
              <li><span class="node"><svg class="i16"><use href="#plane16"/></svg>MOLD_FRONT</span></li>
              <li><span class="node"><svg class="i16"><use href="#csys"/></svg>MOLD_DEF_CSYS</span></li>
              <li><span class="node"><i class="twist open"></i><svg class="i16"><use href="#part16"/></svg>COMPONENT.PRT</span>
                <ul>
                  <li><span class="node"><svg class="i16"><use href="#plane16"/></svg>RIGHT</span></li>
                  <li><span class="node"><svg class="i16"><use href="#plane16"/></svg>TOP</span></li>
                  <li><span class="node"><svg class="i16"><use href="#plane16"/></svg>FRONT</span></li>
                  <li><span class="node"><svg class="i16"><use href="#csys"/></svg>PRT_CSYS_DEF</span></li>
                  <li><span class="node"><i class="twist"></i><svg class="i16"><use href="#extrude16"/></svg>Extrude 1</span></li>
                  <li><span class="node"><svg class="i16"><use href="#round"/></svg>Round 1</span></li>
                  <li><span class="node"><svg class="i16"><use href="#round"/></svg>Round 2</span></li>
                  <li><span class="node"><svg class="i16"><use href="#shrink"/></svg>Shrinkage id 303</span></li>
                  <li><span class="node"><svg class="i16"><use href="#insert"/></svg>Insert Here</span></li>
                </ul>
              </li>
              <li><span class="node"><svg class="i16"><use href="#insert"/></svg>Insert Here</span></li>
            </ul>
          </li>
        </ul>
      </div>
    </aside>
    <main class="viewport">
      <div class="viewbar">
        <button aria-label="Refit"><svg class="i18"><use href="#zfit"/></svg></button>
        <button aria-label="Zoom In"><svg class="i18"><use href="#zin"/></svg></button>
        <button aria-label="Zoom Out"><svg class="i18"><use href="#zout"/></svg></button>
        <button aria-label="Repaint"><svg class="i18"><use href="#repaint"/></svg></button>
        <button aria-label="Display Style" class="menu"><svg class="i18"><use href="#dstyle"/></svg></button>
        <button aria-label="Saved Orientations" class="menu"><svg class="i18"><use href="#named"/></svg></button>
        <button aria-label="View Manager"><svg class="i18"><use href="#camera"/></svg></button>
        <button aria-label="Datum Display Filters" class="menu"><svg class="i18"><use href="#datumf"/></svg></button>
        <button aria-label="Annotation Display"><svg class="i18"><use href="#annot"/></svg></button>
        <button aria-label="Surface Display"><svg class="i18"><use href="#surf"/></svg></button>
        <button aria-label="Pull Direction Display" class="pressed"><svg class="i18"><use href="#pullv"/></svg></button>
        <button aria-label="Spin Center"><svg class="i18"><use href="#spin"/></svg></button>
      </div>
      <svg class="model" viewBox="325 380 1456 660" preserveAspectRatio="xMidYMin slice" role="img" aria-label="Shaded model with datum planes">
        <defs>
          <linearGradient id="top" gradientUnits="userSpaceOnUse" x1="860" y1="687" x2="1030" y2="945">
            <stop offset="0" stop-color="#808790"/><stop offset=".17" stop-color="#86919a"/><stop offset=".41" stop-color="#808790"/><stop offset=".55" stop-color="#828b94"/><stop offset=".77" stop-color="#87929a"/><stop offset="1" stop-color="#808790"/>
          </linearGradient>
          <clipPath id="body"><path d="M593 702L922 486Q937 475 953 484L1020 518L1083 551Q1128 572 1153 611Q1170 632 1185 656Q1206 687 1230 714Q1248 733 1267 744L1307 764L1360 792Q1373 800 1374 813Q1373 824 1368 829L1055 1039L1040 1050H998L940 1019L907 998Q866 975 817 900Q776 840 750 823Q739 815 727 810L650 770L598 743Q584 737 583 721Q583 709 593 702Z"/></clipPath>
          <filter id="b2" x="-20%" y="-20%" width="140%" height="140%"><feGaussianBlur stdDeviation="2"/></filter>
          <filter id="b4" x="-20%" y="-20%" width="140%" height="140%"><feGaussianBlur stdDeviation="4"/></filter>
          <filter id="b7" x="-20%" y="-20%" width="140%" height="140%"><feGaussianBlur stdDeviation="7"/></filter>
        </defs>
        <g clip-path="url(#body)" fill="none" stroke-linejoin="round">
          <path d="M570 470H1390V1060H570z" fill="url(#top)"/>
          <path d="M1360 798L1022 1022" stroke="#88939b" stroke-width="16" filter="url(#b4)"/>
          <path d="M590 700L922 484Q937 473 953 482L1083 549Q1128 570 1153 609Q1206 687 1230 712Q1248 731 1267 742L1360 790" stroke="#4c555b" stroke-width="3" filter="url(#b2)"/>
          <path d="M582 719Q582 738 596 749L650 776L727 816Q776 840 817 908Q866 981 907 1004L1010 1056" stroke="#15181b" stroke-width="32" filter="url(#b7)"/>
          <path d="M1378 813Q1376 826 1368 834L1050 1049" stroke="#101214" stroke-width="28" filter="url(#b7)"/>
          <path d="M750 794Q794 812 824 860Q854 910 880 940Q896 957 925 975Q888 964 868 944Q842 915 812 868Q788 826 750 794Z" fill="#94a0a9" filter="url(#b4)"/>
          <path d="M762 800Q794 818 820 864Q850 912 876 941Q888 954 906 968Q884 958 870 944Q844 917 815 870Q790 828 762 800Z" fill="#bcc7d0" filter="url(#b2)"/>
          <ellipse cx="1022" cy="1032" rx="10" ry="5" fill="#c3ced6" filter="url(#b2)"/>
        </g>
        <g fill="none" stroke="#7b7b7d" shape-rendering="crispEdges">
          <path d="M751 581L1215 824L1206 955L742 713Z"/>
          <path d="M957 1040L558 831L927 586L1391 829L1074 1039"/>
          <path d="M821 837L1189 591L1181 723L812 967Z" stroke="#96632f"/>
        </g>
        <path d="M977 699L976 653H970L978 638L986 653H980L978 699H990L993 654H987L997 639L1003 655H997L992 699" fill="none" stroke="#0000e6" shape-rendering="crispEdges"/>
        <text x="1006" y="626" class="annotation">PULL DIRECTION</text>
      </svg>
    </main>
  </div>
</section>
</body>
</html>
```

FILE: styles.css
```css
* { box-sizing: border-box; }

body {
  margin: 0;
  min-height: 100vh;
  display: flex;
  flex-direction: column;
  background: #fcfcfc;
  color: #3c3c3c;
  font: 11px/14px "Liberation Sans", Arial, sans-serif;
}

button {
  margin: 0;
  padding: 0;
  border: 0;
  background: none;
  color: inherit;
  font: inherit;
  white-space: nowrap;
}
button:disabled, .dim { color: #a0a0a0; }

h1, h2 { margin: 0; font-size: 12px; font-weight: bold; }
ul { margin: 0; padding: 0; list-style: none; }
svg { display: block; flex: none; }

.sprite { position: absolute; width: 0; height: 0; }
.i12 { width: 12px; height: 12px; }
.i16 { width: 16px; height: 16px; }
.i18 { width: 18px; height: 18px; }
.i20 { width: 20px; height: 20px; }
.i32 { width: 32px; height: 32px; }

.caret {
  display: inline-block;
  flex: none;
  width: 7px;
  height: 5px;
  background: #3c3c3c;
  clip-path: polygon(0 0, 100% 0, 50% 100%);
}
button:disabled .caret { background: #a0a0a0; }

/* Window frame */
.window {
  border: solid #979797;
  border-width: 3px 3px 0;
  outline: 1px solid #505050;
  margin: 1px 1px 0;
  padding: 0 4px 6px;
  background: #fcfcfc;
}
.main {
  flex: 1;
  display: flex;
  flex-direction: column;
  padding-bottom: 0;
}

.titlebar { display: flex; align-items: center; height: 32px; }
.quick { display: flex; align-items: center; gap: 8px; padding-left: 8px; }
.quick button { display: flex; align-items: center; gap: 7px; }
.rule { width: 1px; height: 24px; margin: 0 -3px; background: #c5c7c9; }
.quick .more { border-top: 1px solid #3c3c3c; margin-left: 3px; padding: 2px 1px 0; }
.title { flex: 1; padding-bottom: 2px; text-align: center; }
.controls { display: flex; gap: 15px; padding: 0 6px 0 0; }

/* Ribbon tabs */
.tabs { display: flex; align-items: flex-end; height: 29px; }
.tab {
  height: 22px;
  padding: 0 10px 0 11px;
  border: solid #c5c7c9;
  border-width: 1px 1px 0 0;
  background: #edeef0;
  color: #76797c;
  font-size: 12px;
  font-weight: bold;
}
.tab.active {
  height: 26px;
  border-left-width: 1px;
  border-radius: 2px 2px 0 0;
  margin-bottom: -1px;
  padding-top: 1px;
  padding-left: 10px;
  background: #fcfcfc;
  color: #3c3c3c;
}
.tab.file { display: flex; align-items: center; gap: 3px; width: 44px; padding: 0 7px; margin-right: 8px; border-left-width: 1px; }
.tab.file .caret { background: #76797c; }
.helpers { display: flex; align-items: center; gap: 8px; height: 29px; margin-left: auto; padding: 0 3px 4px 0; }
.helpers .drop { display: flex; align-items: center; gap: 9px; }

/* Ribbon body */
.ribbon { display: flex; height: 104px; border: 1px solid #c5c7c9; }
.group { display: flex; flex-direction: column; border-right: 1px solid #c5c7c9; }
.tools { display: grid; height: 78px; padding-top: 1px; align-items: start; }
.label, .rest {
  border: 0;
  border-top: 1px solid #c5c7c9;
  background: #edeef0;
}
.label { flex: 1; display: flex; align-items: center; justify-content: center; gap: 6px; }
.rest { flex: 1; height: 24px; align-self: flex-end; }

.big { display: flex; flex-direction: column; align-items: center; padding-top: 4px; }
.big > span { margin-top: 8px; text-align: center; }
.big > .caret { margin-top: 3px; }
.big span .caret { margin: 0 0 2px 5px; }

.list { display: grid; grid-auto-rows: 25px; }
.spaced { padding-left: 8px; }
.cmd { display: flex; align-items: center; gap: 4px; }
.cmd .caret { margin-left: 3px; }

.operations { grid-template-columns: 70px 72px; }
.getdata { grid-template-columns: 131px; padding-left: 7px; }
.datum { grid-template-columns: 47px 111px 48px; }
.shapes { grid-template-columns: 52px 89px; }
.engineering { grid-template-columns: 84px 65px; padding-left: 7px; }
.editing { grid-template-columns: 48px 53px 65px 64px; column-gap: 5px; }
.surfaces { grid-template-columns: 62px 72px; }
.intent { grid-template-columns: 79px; }
.refwork { grid-template-columns: 59px 59px; padding-left: 20px; padding-right: 20px; }
.modifiers { grid-template-columns: 89px; padding-left: 7px; }
.design { grid-template-columns: 62px 88px; }
.parting { grid-template-columns: 54px 51px 88px; }
.components { grid-template-columns: 85px 98px; }
.production { grid-template-columns: 112px; padding-left: 7px; }
.analysis { grid-template-columns: 55px 109px; }
.goto { grid-template-columns: 48px; }

/* Model tree and graphics area */
.workspace { flex: 1; display: flex; min-height: 0; }
.sidebar { display: flex; flex-direction: column; width: 317px; padding-top: 13px; }
.sidetabs { display: flex; }
.sidetab {
  display: flex;
  align-items: center;
  justify-content: center;
  width: 30px;
  height: 29px;
  border: solid #c5c7c9;
  border-width: 1px 1px 0 0;
  border-radius: 2px 2px 0 0;
  background: #edeef0;
}
.sidetab.active { border-left-width: 1px; height: 30px; margin-bottom: -1px; background: #fcfcfc; }
.panel { flex: 1; border: solid #c5c7c9; border-width: 1px 3px 0 1px; }
.panelhead { display: flex; align-items: center; gap: 4px; height: 29px; padding: 0 3px 0 20px; border-bottom: 1px solid #c5c7c9; }
.panelhead h2 { flex: 1; }
.panelhead .drop { display: flex; align-items: center; gap: 6px; padding: 0 0 0 5px; }
.tree { padding-left: 4px; font-size: 12px; color: #4c4c4c; }
.tree ul { padding-left: 20px; }
.node { display: flex; align-items: center; gap: 3px; height: 18px; position: relative; }
.twist {
  position: absolute;
  left: -14px;
  width: 7px;
  height: 9px;
  background: #8a8a8a;
  clip-path: polygon(0 0, 100% 50%, 0 100%);
}
.twist.open { left: -16px; width: 9px; height: 7px; clip-path: polygon(0 0, 100% 0, 50% 100%); }

.viewport { flex: 1; display: flex; flex-direction: column; align-items: center; min-width: 0; padding-top: 8px; }
.viewbar { display: flex; height: 28px; border: solid #e6e8eb; border-width: 1px 5px; outline: 1px solid #c5c7c9; outline-offset: -1px; background: #fff; }
.viewbar button { display: flex; align-items: center; justify-content: center; width: 27px; border-left: 1px solid #c5c7c9; position: relative; }
.viewbar .menu { width: 28px; }
.viewbar .menu::after {
  content: "";
  position: absolute;
  right: 2px;
  bottom: 3px;
  width: 4px;
  height: 4px;
  background: #555;
  clip-path: polygon(100% 0, 100% 100%, 0 100%);
}
.viewbar .pressed { background: #e2e4e8; box-shadow: inset 0 0 0 1px #a4a6aa; }
.model { flex: 1 1 0; width: 100%; min-height: 0; }
.annotation { font-size: 15px; fill: #0000e6; }
```
